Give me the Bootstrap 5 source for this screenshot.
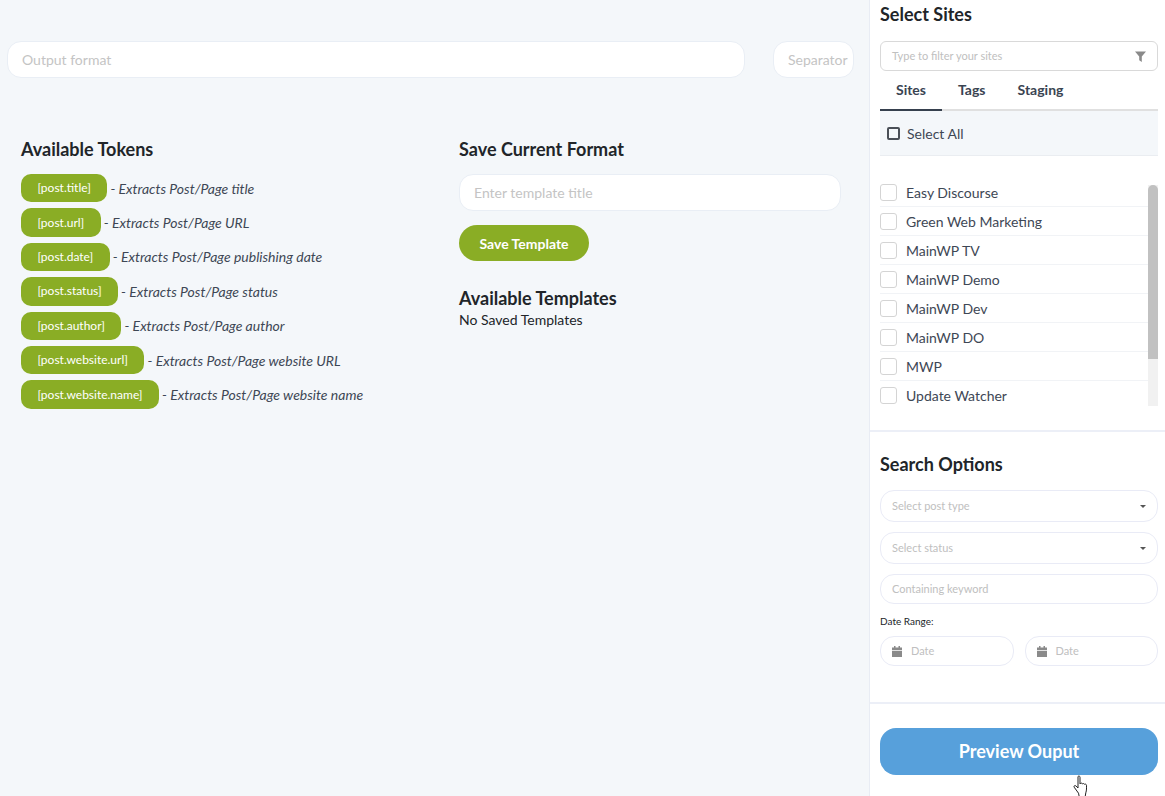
<!DOCTYPE html>
<html lang="en">
<head>
<meta charset="utf-8">
<title>Post Report</title>
<link href="https://cdn.jsdelivr.net/npm/bootstrap@5.3.0/dist/css/bootstrap.min.css" rel="stylesheet">
<style>
html,body{height:796px;overflow:hidden}
body{font-family:Lato,"Liberation Sans",sans-serif;background:#f4f7fa;color:#212529;font-size:14px;position:relative}
.shell{height:796px}
.main{width:869px;flex:none}
.format-row{padding:41px 15px 0 7px;gap:28px}
.pill{height:37px;border:1px solid #e9eef5;border-radius:14px;background:#fff;padding:0 14px;font-size:14px;color:#c4c4c4;display:flex;align-items:center;overflow:hidden;white-space:nowrap}
.pill.sep{width:81px;flex:none}
.columns{padding:60px 28px 0 21px}
.col-tokens{width:438px;flex:none}
h2.t{font-size:18px;font-weight:700;margin:0;line-height:22px;color:#212529}
.tokens{margin-top:14px;display:flex;flex-direction:column;gap:6px}
.tok{display:flex;align-items:center;font-style:italic;font-size:14px;color:#3e4755;height:28.4px}
.tok b{font-style:normal;font-weight:400;background:#8aad25;color:#fff;font-size:12px;border-radius:10px;height:28.4px;padding:0 16.5px;display:flex;align-items:center;margin-right:3px}
.btn-save{background:#8aad25;color:#fff;border:0;border-radius:18px;height:36px;width:130px;font-size:14px;font-weight:700;margin-top:14px}
.side{width:296px;flex:none;background:#fff;border-left:1px solid #e8ecf4;height:796px}
.sec{padding:0 7px 0 10px}
.filter{height:30px;border:1px solid #d9d9d9;border-radius:6px;font-size:11px;color:#c0c0c0;padding:0 11px;margin-top:16px}
.tabs{height:40px;border-bottom:2px solid #e0e0e0;font-weight:700;font-size:14px;color:#3a4452}
.tabs span{padding:0 16px;height:40px;line-height:37px}
.tabs span.on{border-bottom:2px solid #36404e;width:62px;padding:0;text-align:center}
.tabs span:nth-child(2){padding:0 16px}
.selall{height:45px;background:#f4f7fa;border-bottom:1px solid #eaedf1;padding-left:7px;gap:7px;font-size:14px;color:#3e4755}
.selall i{width:13px;height:13px;border:2px solid #4a4f57;border-radius:2px;display:block}
.sites{height:228px;margin-top:22px;position:relative;overflow:hidden}
.site{height:29px;border-bottom:1px solid #f1f3f6;gap:9px;font-size:14px;color:#3e4755;margin-right:10px;margin-top:0}
.site i{width:17px;height:17px;border:1px solid #d4d4d4;border-radius:3px;display:block}
.sb{position:absolute;right:0;top:7px;bottom:0;width:10px;background:#f1f1f1}
.sb::before{content:"";display:block;height:174px;background:#c1c1c1;border-radius:5px 5px 0 0}
.rule{height:2px;background:#eceff7}
.ctl{height:32px;border:1px solid #e9ebf6;border-radius:14px;font-size:11px;color:#c0c0c0;padding:0 11px;margin-bottom:10px}
.caret{width:0;height:0;border:3px solid transparent;border-top:3.5px solid #555;border-bottom:0}
.lbl{font-size:10px;color:#212529;line-height:14px;margin:3px 0 8px;font-weight:400}
.dates{gap:11px}
.dates .ctl{flex:1;margin:0;height:30px;gap:9px}
.go{display:block;width:278px;height:47px;background:#57a0db;color:#fff;border:0;border-radius:16px;font-size:18px;font-weight:700}
.hand{position:absolute;left:1072px;top:775px;width:20px;height:22px}
</style>
</head>
<body>
<div class="d-flex shell">
  <main class="main">
    <div class="d-flex format-row">
      <div class="pill flex-grow-1">Output format</div>
      <div class="pill sep">Separator</div>
    </div>
    <div class="d-flex columns">
      <div class="col-tokens">
        <h2 class="t">Available Tokens</h2>
        <div class="tokens">
          <div class="tok"><b>[post.title]</b>- Extracts Post/Page title</div>
          <div class="tok"><b>[post.url]</b>- Extracts Post/Page URL</div>
          <div class="tok"><b>[post.date]</b>- Extracts Post/Page publishing date</div>
          <div class="tok"><b>[post.status]</b>- Extracts Post/Page status</div>
          <div class="tok"><b>[post.author]</b>- Extracts Post/Page author</div>
          <div class="tok"><b>[post.website.url]</b>- Extracts Post/Page website URL</div>
          <div class="tok"><b>[post.website.name]</b>- Extracts Post/Page website name</div>
        </div>
      </div>
      <div class="flex-grow-1">
        <h2 class="t">Save Current Format</h2>
        <div class="pill mt-3" style="margin-top:14px!important">Enter template title</div>
        <button class="btn-save d-block">Save Template</button>
        <h2 class="t" style="margin-top:26px">Available Templates</h2>
        <div class="avail">No Saved Templates</div>
      </div>
    </div>
  </main>
  <aside class="side d-flex flex-column">
    <div class="sec">
      <h2 class="t" style="margin-top:3px">Select Sites</h2>
      <div class="filter d-flex align-items-center justify-content-between">
        <span>Type to filter your sites</span>
        <svg width="11" height="11" viewBox="0 0 11 11"><path d="M0 .5h11L6.8 5.6V11L4.2 9.2V5.6z" fill="#8a8a8a"/></svg>
      </div>
      <div class="tabs d-flex">
        <span class="on">Sites</span><span>Tags</span><span>Staging</span>
      </div>
      <div class="selall d-flex align-items-center"><i></i><span>Select All</span></div>
      <div class="sites">
        <div class="site d-flex align-items-center"><i></i>Easy Discourse</div>
        <div class="site d-flex align-items-center"><i></i>Green Web Marketing</div>
        <div class="site d-flex align-items-center"><i></i>MainWP TV</div>
        <div class="site d-flex align-items-center"><i></i>MainWP Demo</div>
        <div class="site d-flex align-items-center"><i></i>MainWP Dev</div>
        <div class="site d-flex align-items-center"><i></i>MainWP DO</div>
        <div class="site d-flex align-items-center"><i></i>MWP</div>
        <div class="site d-flex align-items-center"><i></i>Update Watcher</div>
        <div class="sb"></div>
      </div>
    </div>
    <div class="rule" style="margin-top:24px"></div>
    <div class="sec">
      <h2 class="t" style="margin-top:21px;margin-bottom:15px">Search Options</h2>
      <div class="ctl d-flex align-items-center justify-content-between"><span>Select post type</span><span class="caret"></span></div>
      <div class="ctl d-flex align-items-center justify-content-between"><span>Select status</span><span class="caret"></span></div>
      <div class="ctl d-flex align-items-center" style="height:30px">Containing keyword</div>
      <div class="lbl">Date Range:</div>
      <div class="d-flex dates">
        <div class="ctl d-flex align-items-center"><svg width="10" height="11" viewBox="0 0 10 11"><path d="M2 0h1.500v1.500h3V0H8v1.500h2V4H0V1.500h2zM0 4.800h10V11H0z" fill="#8a8a8a"/></svg><span>Date</span></div>
        <div class="ctl d-flex align-items-center"><svg width="10" height="11" viewBox="0 0 10 11"><path d="M2 0h1.500v1.500h3V0H8v1.500h2V4H0V1.500h2zM0 4.800h10V11H0z" fill="#8a8a8a"/></svg><span>Date</span></div>
      </div>
    </div>
    <div class="rule" style="margin-top:36px"></div>
    <div class="sec" style="padding-top:24px">
      <button class="go">Preview Ouput</button>
    </div>
  </aside>
</div>
<svg class="hand" viewBox="0 0 20 22"><path d="M6 1.500c.9-.9 2-.4 2 .8V9l.6-.6c.9-.5 1.700-.2 1.900.5.700-.6 1.700-.4 2 .4.800-.5 1.900-.1 2 1 0 2.500.2 5-.7 7.500l-.6 3.700M6 1.500V13L3.800 10.800c-1-.7-2.300.3-1.600 1.400l4.300 6 .8 3.800" fill="#fff" stroke="#222" stroke-width="1"/></svg>
</body>
</html>
